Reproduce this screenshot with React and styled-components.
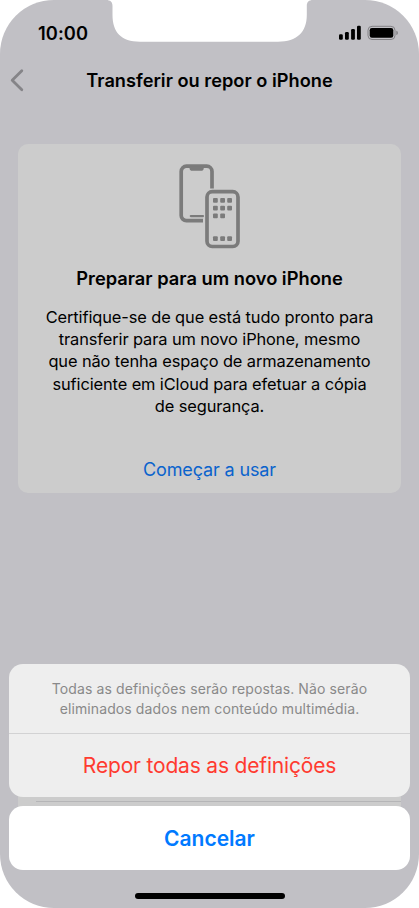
import styled, { createGlobalStyle } from "styled-components";

const GlobalStyle = createGlobalStyle`
    * {
        box-sizing: border-box;
    }

    body {
        margin: 0;
        background: #ffffff;
        font-family: Inter, "Liberation Sans", sans-serif;
    }

    button {
        display: block;
        padding: 0;
        border: 0;
        background: none;
        font-family: inherit;
    }
`;

const Screen = styled.div`
    position: relative;
    display: flex;
    flex-direction: column;
    width: 419px;
    height: 908px;
    overflow: hidden;
    border-radius: 54px;
    background: #c1c0c5;
    color: #000000;
`;

const Notch = styled.svg`
    position: absolute;
    top: 0;
    left: 106px;
`;

const StatusBar = styled.header`
    display: flex;
    justify-content: space-between;
    height: 58px;
    padding: 22px 20px 0 38px;
`;

const Clock = styled.span`
    font-size: 18.3px;
    line-height: 23px;
    font-weight: 600;
    letter-spacing: 0.05px;
`;

const NavBar = styled.nav`
    display: grid;
    grid-template-columns: 40px 1fr 40px;
    align-items: center;
    height: 44px;
`;

const BackButton = styled.button`
    height: 44px;
    padding-left: 9px;

    svg {
        display: block;
    }
`;

const NavTitle = styled.h1`
    margin: 0;
    font-size: 18.2px;
    line-height: 24px;
    font-weight: 600;
    text-align: center;
    white-space: nowrap;
    letter-spacing: 0.02px;
`;

const Content = styled.main`
    display: flex;
    flex-direction: column;
    justify-content: space-between;
    flex: 1;
    padding: 42.4px 18px 44px;
`;

const Card = styled.section`
    display: flex;
    flex-direction: column;
    align-items: center;
    height: 349px;
    padding-top: 18.6px;
    border-radius: 10px;
    background: #cccccc;
    text-align: center;
`;

const CardTitle = styled.h2`
    margin: 17.4px 0 0;
    font-size: 18.3px;
    line-height: 24px;
    font-weight: 600;
    white-space: nowrap;
`;

const CardText = styled.p`
    margin: 15.3px 0 0;
    font-size: 16.4px;
    line-height: 22.4px;
    white-space: nowrap;
    letter-spacing: -0.1px;
`;

const CardLink = styled.button`
    margin-top: 40px;
    color: #0a63cd;
    font-size: 18px;
    line-height: 24px;
    white-space: nowrap;
    letter-spacing: -0.13px;
`;

const OptionList = styled.div`
    height: 104px;
    padding: 41px 0 0 18px;
    border-radius: 10px;
    background: #cccccc;
`;

const OptionDivider = styled.hr`
    height: 1px;
    margin: 0;
    border: 0;
    background: #b5b5b7;
`;

const ActionSheet = styled.div`
    position: absolute;
    right: 9px;
    bottom: 38px;
    left: 9px;
    display: flex;
    flex-direction: column;
    gap: 9px;
`;

const SheetGroup = styled.div`
    overflow: hidden;
    border-radius: 14px;
    background: ${({ $solid }) => ($solid ? "#ffffff" : "#eeeeee")};
`;

const SheetMessage = styled.p`
    height: 70px;
    margin: 0;
    padding-top: 15px;
    border-bottom: 1px solid #d2d2d3;
    color: #898989;
    font-size: 14px;
    line-height: 20px;
    text-align: center;
    white-space: nowrap;
    letter-spacing: 0.11px;
`;

const SheetButton = styled.button`
    width: 100%;
    height: ${({ $cancel }) => ($cancel ? "64px" : "63px")};
    color: ${({ $cancel }) => ($cancel ? "#007aff" : "#ff3b30")};
    font-size: 21px;
    font-weight: ${({ $cancel }) => ($cancel ? 600 : 400)};
    letter-spacing: ${({ $cancel }) => ($cancel ? "0" : "-0.18px")};
`;

const HomeIndicator = styled.div`
    position: absolute;
    bottom: 9px;
    left: 135px;
    width: 150px;
    height: 6px;
    border-radius: 3px;
    background: #000000;
`;

function StatusIcons() {
    return (
        <svg width="60" height="24" viewBox="0 0 60 24">
            <rect x="0" y="12.2" width="3.8" height="5.6" rx="1.2" />
            <rect x="6" y="10" width="3.8" height="7.8" rx="1.2" />
            <rect x="12.1" y="7" width="3.8" height="10.8" rx="1.2" />
            <rect x="18" y="3.8" width="3.8" height="14" rx="1.2" />
            <rect x="29" y="4.3" width="27" height="13.2" rx="4" fill="none" stroke="#828185" strokeWidth="1" />
            <rect x="30.7" y="6" width="23.6" height="9.8" rx="2.2" />
            <path d="M57.3 8.8c1 .3 1.6 1.1 1.6 2.1s-.6 1.8-1.6 2.1z" fill="#828185" />
        </svg>
    );
}

function PhonesIcon() {
    const dots = [
        [213, 197.5], [220.2, 197.5], [227.2, 197.5],
        [213, 205.2], [220.2, 205.2], [227.2, 205.2],
        [213, 213], [220.2, 213],
        [213, 235.8], [220.2, 235.8], [227.2, 235.8],
    ];

    return (
        <svg width="62" height="86" viewBox="179 162.5 62 86" fill="none">
            <path
                d="M203 220.2H186.5a5.3 5.3 0 0 1-5.3-5.3V171a5.3 5.3 0 0 1 5.3-5.3h20.2a5.3 5.3 0 0 1 5.3 5.3v17"
                stroke="#7b7b7b"
                strokeWidth="3.7"
            />
            <path d="M189.5 166h14.3v1.4a2.8 2.8 0 0 1-2.8 2.8h-8.7a2.8 2.8 0 0 1-2.8-2.8z" fill="#7b7b7b" />
            <path d="M190.8 215.6H203" stroke="#7b7b7b" strokeWidth="2.2" strokeLinecap="round" />
            <rect x="207" y="191.2" width="31" height="54.8" rx="5.3" stroke="#7b7b7b" strokeWidth="3.7" />
            {dots.map(([x, y]) => (
                <rect key={`${x}-${y}`} x={x} y={y} width="4.8" height="4.8" rx="1" fill="#7b7b7b" />
            ))}
        </svg>
    );
}

export default function App() {
    return (
        <>
            <GlobalStyle />
            <Screen>
                <Notch width="208" height="43" viewBox="0 0 208 43">
                    <path
                        d="M0 0C4.5 0 6.5 2 6.5 6V15C6.5 32 15 41.7 34 41.7H172C191 41.7 200.8 32 200.8 15V6C200.8 2 202.8 0 207 0z"
                        fill="#ffffff"
                    />
                </Notch>
                <StatusBar>
                    <Clock>10:00</Clock>
                    <StatusIcons />
                </StatusBar>
                <NavBar>
                    <BackButton aria-label="Voltar">
                        <svg width="15" height="24" viewBox="0 0 15 24" fill="none">
                            <path d="M12.8 2.8L3.2 12.3L12.8 21.8" stroke="#858488" strokeWidth="2.8" strokeLinecap="round" strokeLinejoin="round" />
                        </svg>
                    </BackButton>
                    <NavTitle>Transferir ou repor o iPhone</NavTitle>
                </NavBar>
                <Content>
                    <Card>
                        <PhonesIcon />
                        <CardTitle>Preparar para um novo iPhone</CardTitle>
                        <CardText>
                            Certifique-se de que está tudo pronto para<br />
                            transferir para um novo iPhone, mesmo<br />
                            que não tenha espaço de armazenamento<br />
                            suficiente em iCloud para efetuar a cópia<br />
                            de segurança.
                        </CardText>
                        <CardLink>Começar a usar</CardLink>
                    </Card>
                    <OptionList>
                        <OptionDivider />
                    </OptionList>
                </Content>
                <ActionSheet>
                    <SheetGroup>
                        <SheetMessage>
                            Todas as definições serão repostas. Não serão<br />
                            eliminados dados nem conteúdo multimédia.
                        </SheetMessage>
                        <SheetButton>Repor todas as definições</SheetButton>
                    </SheetGroup>
                    <SheetGroup $solid>
                        <SheetButton $cancel>Cancelar</SheetButton>
                    </SheetGroup>
                </ActionSheet>
                <HomeIndicator />
            </Screen>
        </>
    );
}
